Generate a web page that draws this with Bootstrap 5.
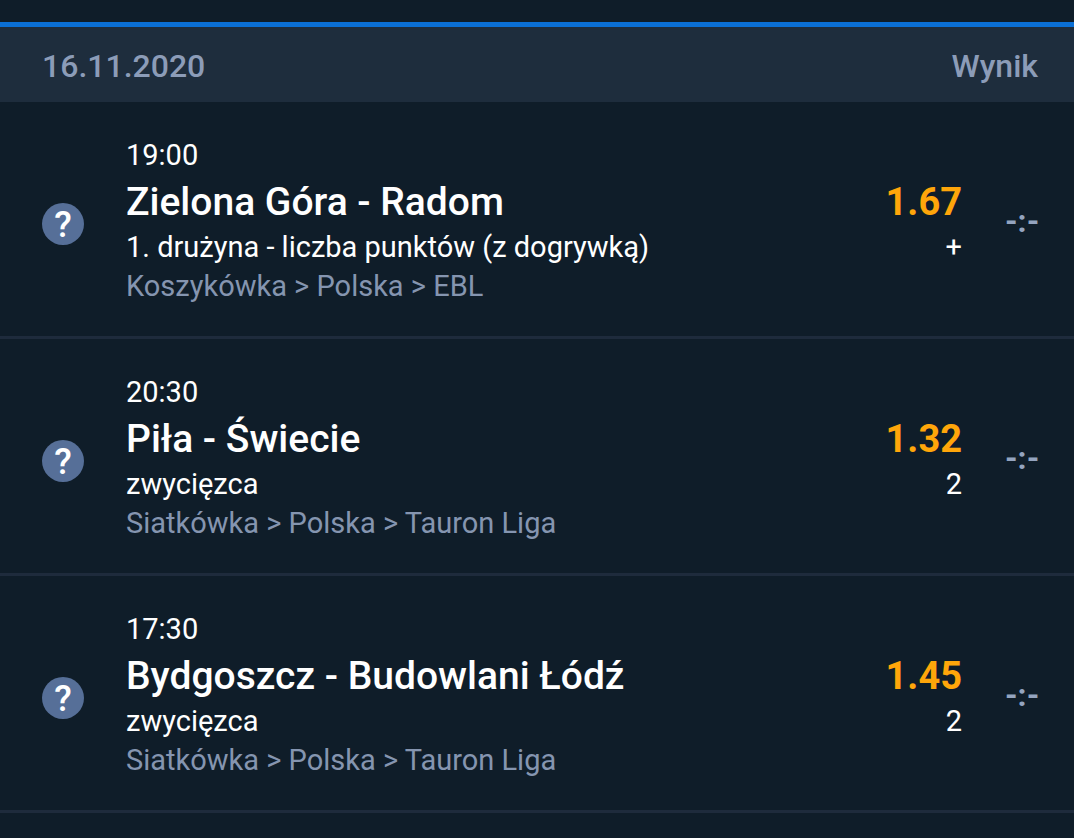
<!DOCTYPE html>
<html lang="pl">
<head>
<meta charset="utf-8">
<meta name="viewport" content="width=device-width, initial-scale=1">
<title>Kupon</title>
<link href="https://cdn.jsdelivr.net/npm/bootstrap@5.3.0/dist/css/bootstrap.min.css" rel="stylesheet">
<style>
body{background:#0f1d29;color:#fff;font-family:Roboto,"Noto Sans",sans-serif;font-size:29px;line-height:39px}
.coupon-top{border-bottom:5px solid #0b70d6;height:27px}
.day-head{background:#1e2d3d;color:#8c9cb8;font-size:32px;line-height:48px;font-weight:500;padding:15px 36px 12px 42px}
.bet{border-bottom:3px solid #1e2b3c;padding:34px 36px 30px 42px}
.status-mark{width:42px;height:42px;margin-right:42px;margin-top:6px;background:#566f98;font-size:36px;line-height:44px;font-weight:500}
.teams{font-size:39px;line-height:51px;padding-top:2px;font-weight:500}
.path-line{color:#8595b0}
.odds{color:#ffa60a;font-size:38px;line-height:51px;padding-top:2px;font-weight:700}
.score{width:32px;margin-left:43px;margin-right:1px;color:#94a4bf;font-size:32px;font-weight:700}
</style>
</head>
<body>
<div class="coupon-top"></div>
<main>
<header class="day-head d-flex justify-content-between"><span>16.11.2020</span><span>Wynik</span></header>

<article class="bet d-flex align-items-center">
  <span class="status-mark rounded-circle text-center flex-shrink-0">?</span>
  <div class="flex-grow-1">
    <div>19:00</div>
    <h2 class="teams m-0">Zielona Góra - Radom</h2>
    <div>1. drużyna - liczba punktów (z dogrywką)</div>
    <div class="path-line">Koszykówka &gt; Polska &gt; EBL</div>
  </div>
  <div class="text-end"><div class="odds">1.67</div><div>+</div></div>
  <div class="score text-center text-nowrap">-:-</div>
</article>

<article class="bet d-flex align-items-center">
  <span class="status-mark rounded-circle text-center flex-shrink-0">?</span>
  <div class="flex-grow-1">
    <div>20:30</div>
    <h2 class="teams m-0">Piła - Świecie</h2>
    <div>zwycięzca</div>
    <div class="path-line">Siatkówka &gt; Polska &gt; Tauron Liga</div>
  </div>
  <div class="text-end"><div class="odds">1.32</div><div>2</div></div>
  <div class="score text-center text-nowrap">-:-</div>
</article>

<article class="bet d-flex align-items-center">
  <span class="status-mark rounded-circle text-center flex-shrink-0">?</span>
  <div class="flex-grow-1">
    <div>17:30</div>
    <h2 class="teams m-0">Bydgoszcz - Budowlani Łódź</h2>
    <div>zwycięzca</div>
    <div class="path-line">Siatkówka &gt; Polska &gt; Tauron Liga</div>
  </div>
  <div class="text-end"><div class="odds">1.45</div><div>2</div></div>
  <div class="score text-center text-nowrap">-:-</div>
</article>
</main>
<script src="https://cdn.jsdelivr.net/npm/bootstrap@5.3.0/dist/js/bootstrap.bundle.min.js"></script>
</body>
</html>
